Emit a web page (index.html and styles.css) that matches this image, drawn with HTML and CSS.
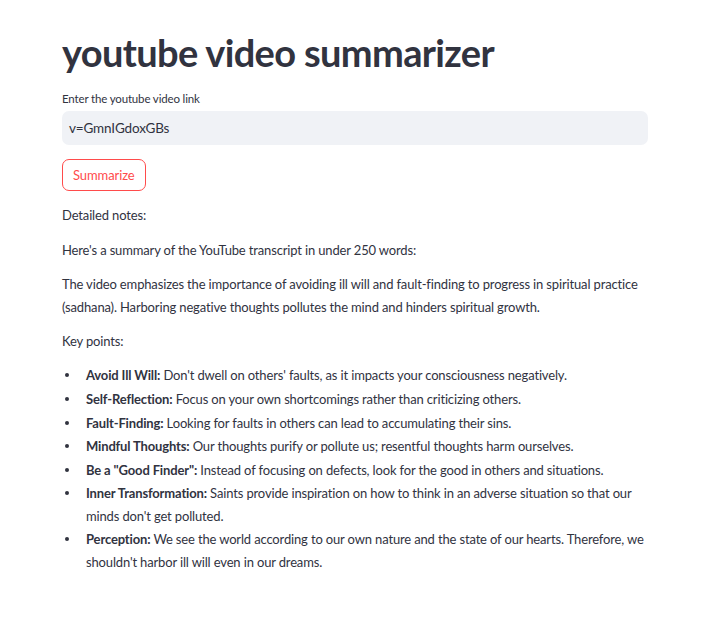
FILE: index.html
```html
<!DOCTYPE html>
<html>
<head>
<meta charset="utf-8">
<link rel="stylesheet" href="styles.css">
</head>
<body>
<main class="app">
  <h1 class="title">youtube video summarizer</h1>
  <div class="field">
    <label class="field-label">Enter the youtube video link</label>
    <div class="input">v=GmnIGdoxGBs</div>
  </div>
  <div class="btn-row"><button class="btn">Summarize</button></div>
  <div class="md">
    <p>Detailed notes:</p>
    <p>Here's a summary of the YouTube transcript in under 250 words:</p>
    <p>The video emphasizes the importance of avoiding ill will and fault-finding to progress in spiritual practice (sadhana). Harboring negative thoughts pollutes the mind and hinders spiritual growth.</p>
    <p>Key points:</p>
    <ul>
      <li><b>Avoid Ill Will:</b> Don't dwell on others' faults, as it impacts your consciousness negatively.</li>
      <li><b>Self-Reflection:</b> Focus on your own shortcomings rather than criticizing others.</li>
      <li><b>Fault-Finding:</b> Looking for faults in others can lead to accumulating their sins.</li>
      <li><b>Mindful Thoughts:</b> Our thoughts purify or pollute us; resentful thoughts harm ourselves.</li>
      <li><b>Be a "Good Finder":</b> Instead of focusing on defects, look for the good in others and situations.</li>
      <li><b>Inner Transformation:</b> Saints provide inspiration on how to think in an adverse situation so that our minds don't get polluted.</li>
      <li><b>Perception:</b> We see the world according to our own nature and the state of our hearts. Therefore, we shouldn't harbor ill will even in our dreams.</li>
    </ul>
  </div>
</main>
</body>
</html>
```
FILE: styles.css
```css
html, body { margin: 0; padding: 0; background: #fff; }
body {
  font-family: Lato, "Noto Sans", sans-serif;
  color: rgb(49, 51, 63);
  font-size: 13px;
  letter-spacing: -0.15px;
}
.app {
  width: 586px;
  padding: 22px 0 40px 62px;
}
.title {
  margin: 0;
  font-size: 38px;
  font-weight: 700;
  line-height: 1.3;
  letter-spacing: -0.65px;
  padding: 6px 0 14px;
}
.field { display: flex; flex-direction: column; }
.field-label {
  font-size: 11.5px;
  line-height: 16px;
  margin-bottom: 4px;
}
.input {
  height: 34px;
  box-sizing: border-box;
  background: rgb(240, 242, 246);
  border-radius: 7px;
  padding: 0 7px;
  display: flex;
  align-items: center;
  font-size: 13.5px;
}
.btn-row { margin-top: 14px; }
.btn {
  font-family: inherit;
  font-size: 13px;
  letter-spacing: -0.1px;
  color: rgb(255, 75, 75);
  background: #fff;
  border: 1px solid rgb(255, 75, 75);
  border-radius: 7px;
  height: 32px;
  padding: 0 10px;
}
.md { margin-top: 13px; line-height: 22.4px; }
.md p { margin: 0 0 12px; }
.md ul { margin: 0; padding: 0 0 0 24px; list-style: none; }
.md li { margin: 0 0 1.2px; position: relative; }
.md li::before {
  content: "";
  position: absolute;
  left: -21px;
  top: 9px;
  width: 4px;
  height: 4px;
  border-radius: 50%;
  background: rgb(49, 51, 63);
}
.md b { font-weight: 700; }
```
